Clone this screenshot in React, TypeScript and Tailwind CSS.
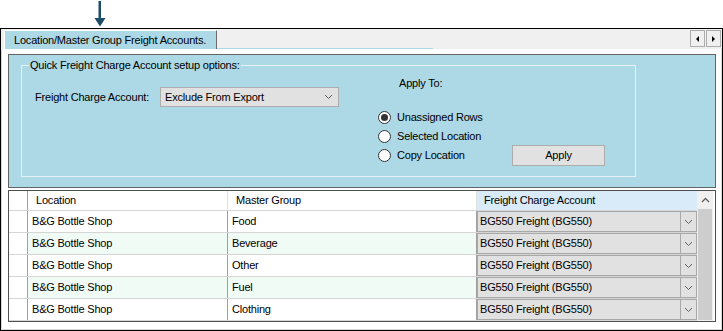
import React from "react";

const rows = [
  { location: "B&G Bottle Shop", group: "Food" },
  { location: "B&G Bottle Shop", group: "Beverage" },
  { location: "B&G Bottle Shop", group: "Other" },
  { location: "B&G Bottle Shop", group: "Fuel" },
  { location: "B&G Bottle Shop", group: "Clothing" },
];

function Chevron() {
  return (
    <svg width="9" height="6" viewBox="0 0 9 6">
      <path d="M1 1 L4.5 4.5 L8 1" fill="none" stroke="#606060" strokeWidth="1" />
    </svg>
  );
}

function Radio({ checked, label }: { checked?: boolean; label: string }) {
  return (
    <div className="flex items-center gap-[6px]">
      <span className="flex h-[13px] w-[13px] items-center justify-center rounded-full border border-[#333] bg-white">
        {checked && <span className="h-[7px] w-[7px] rounded-full bg-[#333]" />}
      </span>
      <span>{label}</span>
    </div>
  );
}

export default function App() {
  return (
    <div className="h-[331px] w-[723px] overflow-hidden bg-white font-['Liberation_Sans',Arial,sans-serif] text-[11px] tracking-[-0.2px] text-black">
      {/* arrow pointer */}
      <div className="h-[28px] pl-[94px]">
        <svg width="12" height="28" viewBox="0 0 12 28">
          <rect x="4.5" y="1" width="2.5" height="18" fill="#1d4c69" />
          <path d="M0.5 18 L11.5 18 L6 26.5 Z" fill="#1d4c69" />
        </svg>
      </div>

      {/* window frame */}
      <div className="flex h-[303px] flex-col border border-black">
        {/* tab strip */}
        <div className="flex h-[20px] bg-[#f0f0f0]">
          <div className="ml-[3px] mt-[1px] h-[19px] w-[213px] border-l border-t border-l-white border-t-white border-r border-r-[#6b6b6b] bg-[#add8e6] pl-[9px] leading-[18px]">
            Location/Master Group Freight Accounts.
          </div>
          <div className="h-px w-[216px] self-end bg-[#add8e6]" />
          <div className="ml-auto mr-[1px] mt-[1px] flex h-[17px] gap-px">
            <div className="flex w-[15px] items-center justify-center border border-[#adadad] bg-[#f0f0f0]">
              <span className="h-0 w-0 border-y-[3px] border-r-[3px] border-y-transparent border-r-black" />
            </div>
            <div className="flex w-[15px] items-center justify-center border border-[#adadad] bg-[#f0f0f0]">
              <span className="h-0 w-0 border-y-[3px] border-l-[3px] border-y-transparent border-l-black" />
            </div>
          </div>
        </div>

        {/* tab page */}
        <div className="flex-1 border-b border-x border-[#d8d8d8] bg-white pl-[6px] pr-[5px] pt-[5px]">
          {/* options panel */}
          <div className="h-[134px] border border-[#646464] bg-[#add8e6] pl-[12px] pt-[10px]">
            <div className="relative h-[112px] w-[615px] border border-[#e6f2f6]">
              <span className="absolute -top-[8px] left-[7px] bg-[#add8e6] px-[1px] leading-[14px]">
                Quick Freight Charge Account setup options:
              </span>
              <div className="flex">
                <div className="flex w-[356px] items-center pl-[13px] pt-[21px] self-start">
                  <span className="w-[125px]">Freight Charge Account:</span>
                  <div className="flex h-[20px] w-[179px] items-center justify-between border border-[#adadad] bg-[#e1e1e1] pl-[4px] pr-[5px]">
                    <span>Exclude From Export</span>
                    <Chevron />
                  </div>
                </div>
                <div className="flex flex-col">
                  <div className="mt-[10px] h-[14px] pl-[21px] leading-[14px]">Apply To:</div>
                  <div className="mt-[18px] flex h-[19px] items-center">
                    <Radio checked label="Unassigned Rows" />
                  </div>
                  <div className="flex h-[19px] items-center">
                    <Radio label="Selected Location" />
                  </div>
                  <div className="flex h-[19px] items-center">
                    <div className="w-[134px]">
                      <Radio label="Copy Location" />
                    </div>
                    <button className="h-[21px] w-[93px] border border-[#adadad] bg-[#e1e1e1] text-center">
                      Apply
                    </button>
                  </div>
                </div>
              </div>
            </div>
          </div>

          {/* grid */}
          <div className="mt-[2px] flex h-[132px] border border-[#505050] bg-white">
            <div className="flex w-[688px] flex-col">
              <div className="flex h-[20px] border-b border-[#d5d5d5]">
                <div className="w-[19px] border-r border-[#a0a0a0]" />
                <div className="flex w-[200px] items-center border-r border-[#e0e0e0] pl-[8px]">Location</div>
                <div className="flex w-[249px] items-center border-r border-[#e0e0e0] pl-[8px]">Master Group</div>
                <div className="flex w-[220px] items-center bg-[#d9eaf8] pl-[7px]">Freight Charge Account</div>
              </div>
              {rows.map((r, i) => (
                <div
                  key={r.group}
                  className={`flex h-[22px] border-b border-[#d5d5d5] ${i % 2 === 1 ? "bg-[#f0fbf6]" : "bg-white"}`}
                >
                  <div className="w-[19px] border-r border-[#a0a0a0] bg-white" />
                  <div className="flex w-[200px] items-center border-r border-[#a0a0a0] pl-[4px]">{r.location}</div>
                  <div className="flex w-[249px] items-center border-r border-[#a0a0a0] pl-[4px]">{r.group}</div>
                  <div className="flex w-[220px] border border-[#a8a8a8] bg-[#e1e1e1]">
                    <div className="flex flex-1 items-center pl-[2px]">BG550 Freight (BG550)</div>
                    <div className="flex w-[16px] items-center justify-center border-l border-[#a8a8a8]">
                      <Chevron />
                    </div>
                  </div>
                </div>
              ))}
            </div>
            {/* vertical scrollbar */}
            <div className="flex w-[16px] flex-col bg-[#f0f0f0]">
              <div className="flex h-[18px] items-center justify-center">
                <svg width="9" height="6" viewBox="0 0 9 6">
                  <path d="M1 5 L4.5 1.5 L8 5" fill="none" stroke="#606060" strokeWidth="1.3" />
                </svg>
              </div>
              <div className="mx-px mb-px flex-1 bg-[#cdcdcd]" />
            </div>
          </div>
        </div>
      </div>
    </div>
  );
}
